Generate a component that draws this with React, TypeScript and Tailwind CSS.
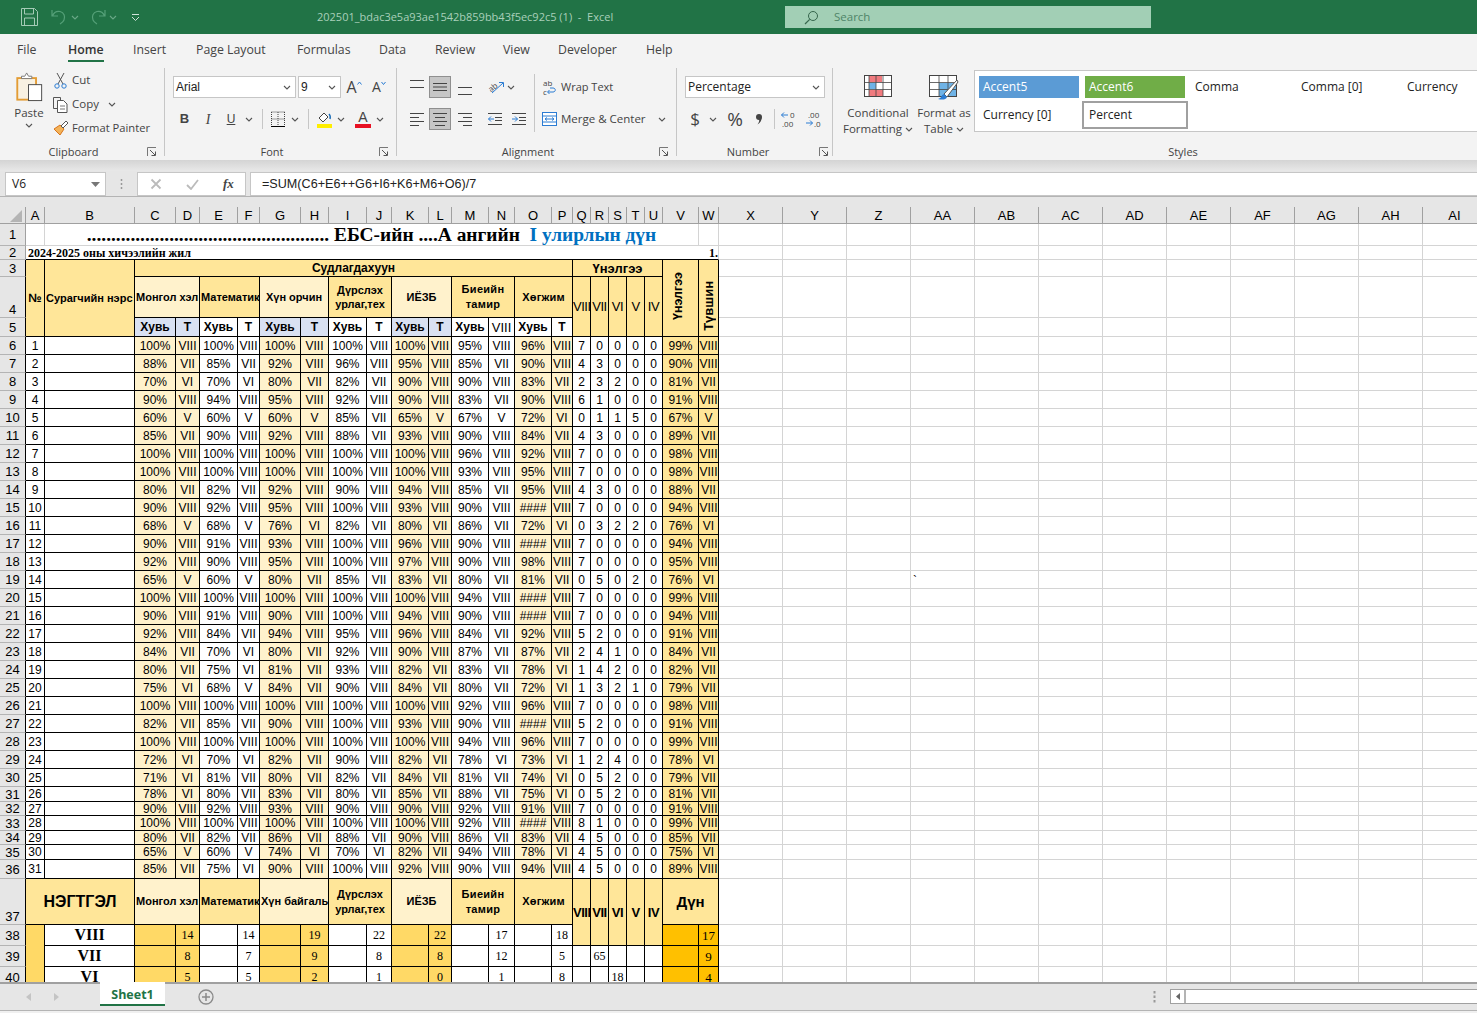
import React from "react";

const ui = "font-['Open_Sans','Noto_Sans',sans-serif]";
const sans = "font-['Liberation_Sans',Arial,sans-serif]";
const serif = "font-['Liberation_Serif','Times_New_Roman',serif]";

const DATA = `100 VIII 100 VIII 100 VIII 100 VIII 100 VIII 95 VIII 96 VIII 7 0 0 0 0 99 VIII
88 VII 85 VII 92 VIII 96 VIII 95 VIII 85 VII 90 VIII 4 3 0 0 0 90 VIII
70 VI 70 VI 80 VII 82 VII 90 VIII 90 VIII 83 VII 2 3 2 0 0 81 VII
90 VIII 94 VIII 95 VIII 92 VIII 90 VIII 83 VII 90 VIII 6 1 0 0 0 91 VIII
60 V 60 V 60 V 85 VII 65 V 67 V 72 VI 0 1 1 5 0 67 V
85 VII 90 VIII 92 VIII 88 VII 93 VIII 90 VIII 84 VII 4 3 0 0 0 89 VII
100 VIII 100 VIII 100 VIII 100 VIII 100 VIII 96 VIII 92 VIII 7 0 0 0 0 98 VIII
100 VIII 100 VIII 100 VIII 100 VIII 100 VIII 93 VIII 95 VIII 7 0 0 0 0 98 VIII
80 VII 82 VII 92 VIII 90 VIII 94 VIII 85 VII 95 VIII 4 3 0 0 0 88 VII
90 VIII 92 VIII 95 VIII 100 VIII 93 VIII 90 VIII # VIII 7 0 0 0 0 94 VIII
68 V 68 V 76 VI 82 VII 80 VII 86 VII 72 VI 0 3 2 2 0 76 VI
90 VIII 91 VIII 93 VIII 100 VIII 96 VIII 90 VIII # VIII 7 0 0 0 0 94 VIII
92 VIII 90 VIII 95 VIII 100 VIII 97 VIII 90 VIII 98 VIII 7 0 0 0 0 95 VIII
65 V 60 V 80 VII 85 VII 83 VII 80 VII 81 VII 0 5 0 2 0 76 VI
100 VIII 100 VIII 100 VIII 100 VIII 100 VIII 94 VIII # VIII 7 0 0 0 0 99 VIII
90 VIII 91 VIII 90 VIII 100 VIII 94 VIII 90 VIII # VIII 7 0 0 0 0 94 VIII
92 VIII 84 VII 94 VIII 95 VIII 96 VIII 84 VII 92 VIII 5 2 0 0 0 91 VIII
84 VII 70 VI 80 VII 92 VIII 90 VIII 87 VII 87 VII 2 4 1 0 0 84 VII
80 VII 75 VI 81 VII 93 VIII 82 VII 83 VII 78 VI 1 4 2 0 0 82 VII
75 VI 68 V 84 VII 90 VIII 84 VII 80 VII 72 VI 1 3 2 1 0 79 VII
100 VIII 100 VIII 100 VIII 100 VIII 100 VIII 92 VIII 96 VIII 7 0 0 0 0 98 VIII
82 VII 85 VII 90 VIII 100 VIII 93 VIII 90 VIII # VIII 5 2 0 0 0 91 VIII
100 VIII 100 VIII 100 VIII 100 VIII 100 VIII 94 VIII 96 VIII 7 0 0 0 0 99 VIII
72 VI 70 VI 82 VII 90 VIII 82 VII 78 VI 73 VI 1 2 4 0 0 78 VI
71 VI 81 VII 80 VII 82 VII 84 VII 81 VII 74 VI 0 5 2 0 0 79 VII
78 VI 80 VII 83 VII 80 VII 85 VII 88 VII 75 VI 0 5 2 0 0 81 VII
90 VIII 92 VIII 93 VIII 90 VIII 90 VIII 92 VIII 91 VIII 7 0 0 0 0 91 VIII
100 VIII 100 VIII 100 VIII 100 VIII 100 VIII 92 VIII # VIII 8 1 0 0 0 99 VIII
80 VII 82 VII 86 VII 88 VII 90 VIII 86 VII 83 VII 4 5 0 0 0 85 VII
65 V 60 V 74 VI 70 VI 82 VII 94 VIII 78 VI 4 5 0 0 0 75 VI
85 VII 75 VI 90 VIII 100 VIII 92 VIII 90 VIII 94 VIII 4 5 0 0 0 89 VIII`
  .split("\n")
  .map((r) => r.split(" "));

const COLS: [string, string][] = [
  ["A", "w-[19px]"], ["B", "w-[90px]"], ["C", "w-[41px]"], ["D", "w-[24px]"], ["E", "w-[38px]"], ["F", "w-[22px]"],
  ["G", "w-[41px]"], ["H", "w-[28px]"], ["I", "w-[38px]"], ["J", "w-[25px]"], ["K", "w-[37px]"], ["L", "w-[23px]"],
  ["M", "w-[37px]"], ["N", "w-[26px]"], ["O", "w-[37px]"], ["P", "w-[21px]"], ["Q", "w-[18px]"], ["R", "w-[18px]"],
  ["S", "w-[18px]"], ["T", "w-[18px]"], ["U", "w-[18px]"], ["V", "w-[36px]"], ["W", "w-[20px]"],
  ["X", "w-[64px]"], ["Y", "w-[64px]"], ["Z", "w-[64px]"], ["AA", "w-[64px]"], ["AB", "w-[64px]"], ["AC", "w-[64px]"],
  ["AD", "w-[64px]"], ["AE", "w-[64px]"], ["AF", "w-[64px]"], ["AG", "w-[64px]"], ["AH", "w-[64px]"], ["AI", "w-[64px]"],
];

const ROW_H: Record<number, string> = {
  31: "h-[15px]", 32: "h-[14px]", 33: "h-[15px]", 34: "h-[14px]", 35: "h-[15px]", 36: "h-[19px]",
};

const LIGHT = "bg-[#FFF2CC]";
const DARK = "bg-[#FFE699]";
const BLUE = "bg-[#D9E1F2]";
const ORANGE = "bg-[#FFD966]";
const AMBER = "bg-[#FFC000]";
const c = `border-r border-b border-black p-0 text-center align-middle overflow-hidden whitespace-nowrap leading-none text-black ${sans}`;
const grid = "border-r border-b border-[#d4d4d4] p-0 overflow-hidden whitespace-nowrap";

function Blanks({ tick }: { tick?: boolean }) {
  return (
    <>
      {Array.from({ length: 12 }).map((_, i) => (
        <td key={i} className={`${grid} ${sans} text-[12px] leading-none pl-[2px] align-top`}>
          {tick && i === 3 ? <span className="inline-block mt-[4px]">`</span> : null}
        </td>
      ))}
    </>
  );
}

function RowHead({ n, h, bottom, light }: { n: number; h: string; bottom?: boolean; light?: boolean }) {
  return (
    <td
      className={`${h} bg-[#e6e6e6] border-b border-b-[#b4b4b4] border-r p-0 text-center text-[13px] leading-none text-black overflow-hidden ${sans} ${
        light ? "border-r-[#a0a0a0]" : "border-r-black"
      } ${bottom ? "align-bottom pb-[1px]" : "align-middle"}`}
    >
      {n}
    </td>
  );
}

const Chev = ({ className = "" }: { className?: string }) => (
  <svg width="8" height="5" viewBox="0 0 8 5" className={className}>
    <path d="M1 1l3 3 3-3" fill="none" stroke="#555" strokeWidth="1.1" />
  </svg>
);

const TitleChev = ({ className = "" }: { className?: string }) => (
  <svg width="8" height="5" viewBox="0 0 8 5" className={className}>
    <path d="M1 1l3 3 3-3" fill="none" stroke="#6aa887" strokeWidth="1.1" />
  </svg>
);

function Slot({ w, children, className = "" }: { w: string; children?: React.ReactNode; className?: string }) {
  return <div className={`${w} h-[22px] flex items-center justify-center shrink-0 ${className}`}>{children}</div>;
}

const Launcher = () => (
  <svg width="10" height="10" viewBox="0 0 10 10">
    <path d="M.5 9V.5H9" fill="none" stroke="#777" />
    <path d="M3 3l5 5M8.500 4.500v4h-4" fill="none" stroke="#555" />
  </svg>
);

/* vertical alignment buttons: horizontal strokes at given y inside the 22px slot */
const VAlign = ({ ys }: { ys: number[] }) => (
  <svg width="16" height="22" viewBox="0 0 16 22">
    {ys.map((y, i) => (
      <path key={i} d={`M1 ${y}h14`} stroke="#444" />
    ))}
  </svg>
);

const LinesAlign = ({ rows }: { rows: [number, number][] }) => (
  <svg width="16" height="15" viewBox="0 0 16 15">
    {rows.map(([x, l], i) => (
      <path key={i} d={`M${x} ${i * 4 + 1.5}h${l}`} stroke="#444" />
    ))}
  </svg>
);

function Group({ w, label, labelW, children }: { w: string; label: string; labelW: string; children: React.ReactNode }) {
  return (
    <div className={`${w} h-[88px] mt-[4px] border-r border-[#c6c6c6] flex flex-col shrink-0`}>
      <div className="h-[76px] shrink-0">{children}</div>
      <div className="h-[16px] shrink-0 flex items-center">
        <div className={`${labelW} text-center text-[11px] text-[#444]`}>{label}</div>
        <Launcher />
      </div>
    </div>
  );
}

const TABS: [string, string][] = [
  ["File", "w-[51px]"], ["Home", "w-[65px]"], ["Insert", "w-[63px]"], ["Page Layout", "w-[101px]"], ["Formulas", "w-[82px]"],
  ["Data", "w-[56px]"], ["Review", "w-[68px]"], ["View", "w-[55px]"], ["Developer", "w-[88px]"], ["Help", "w-[40px]"],
];

const SUBJECTS = [
  { bg: LIGHT, t: "Монгол хэл", s: "C" },
  { bg: DARK, t: "Математик", s: "E" },
  { bg: LIGHT, t: "Хүн орчин", s: "G" },
];

export default function App() {
  return (
    <div className={`w-[1477px] h-[1013px] overflow-hidden bg-[#e6e6e6] flex flex-col ${ui}`}>
      {/* Title bar */}
      <div className="h-[34px] shrink-0 bg-[#217346] flex items-center text-[11.5px] text-[#a9d0ba]">
        <div className="w-[317px] flex items-center shrink-0 pl-[21px]">
          <svg width="17" height="18" viewBox="0 0 17 18" className="mb-[1px]">
            <path d="M.5.500h13l3 3v14H.5z" fill="none" stroke="#a5cbb6" />
            <path d="M3.500 1v5h9V1M3.500 17v-7h10v7" fill="none" stroke="#a5cbb6" />
          </svg>
          <svg width="16" height="18" viewBox="0 0 16 18" className="ml-[13px]">
            <path d="M1 2v6h6M1.500 8C3 4 6 3 9 3.500c4 1 5.500 5 4 8.500-.8 2-2.500 3-4 4" fill="none" stroke="#55a078" strokeWidth="1.200" />
          </svg>
          <TitleChev className="ml-[4px]" />
          <svg width="16" height="18" viewBox="0 0 16 18" className="ml-[11px]">
            <path d="M15 2v6H9M14.500 8C13 4 10 3 7 3.500c-4 1-5.500 5-4 8.500.8 2 2.500 3 4 4" fill="none" stroke="#55a078" strokeWidth="1.200" />
          </svg>
          <TitleChev className="ml-[3px]" />
          <svg width="9" height="9" viewBox="0 0 9 9" className="ml-[14px]">
            <path d="M1 1.500h7M1 4l3.500 3.500L8 4" fill="none" stroke="#cfe3d8" />
          </svg>
        </div>
        <div className="w-[468px] shrink-0 whitespace-nowrap text-[11px]">202501_bdac3e5a93ae1542b859bb43f5ec92c5 (1)&nbsp; -&nbsp; Excel</div>
        <div className="w-[366px] h-[22px] bg-[#a2cfb5] flex items-center text-[#4f8568] shrink-0 pl-[19px] gap-[15px]">
          <svg width="15" height="15" viewBox="0 0 15 15">
            <circle cx="9" cy="6" r="4.500" fill="none" stroke="#36664c" />
            <path d="M5.700 9.300L1 14" stroke="#36664c" strokeWidth="1.200" />
          </svg>
          <span>Search</span>
        </div>
      </div>

      {/* Tabs */}
      <div className="h-[30px] shrink-0 bg-[#f3f3f3] flex pl-[17px] pt-[6px] text-[12.3px] text-[#444]">
        {TABS.map(([t, w]) => (
          <div key={t} className={`${w} shrink-0`}>
            <span className={`inline-block h-[22px] leading-[20px] ${t === "Home" ? "font-semibold text-[#333] border-b-2 border-[#217346]" : ""}`}>{t}</span>
          </div>
        ))}
      </div>

      {/* Ribbon */}
      <div className="h-[96px] shrink-0 bg-[#f3f3f3] flex text-[11.5px] text-[#444]">
        <Group w="w-[165px]" label="Clipboard" labelW="w-[147px]">
          <div className="flex">
            <div className="w-[53px] pl-[5px] flex flex-col items-center pt-[4px] shrink-0">
              <svg width="30" height="30" viewBox="0 0 30 32">
                <rect x="2.500" y="6.500" width="20" height="23" fill="#f8f1e2" stroke="#e39c34" strokeWidth="2" />
                <path d="M7 7V4.500h3.500L12.500 1l2 3.500H18V7z" fill="#fff" stroke="#777" />
                <rect x="14.500" y="13.500" width="14" height="17" fill="#fff" stroke="#444" />
              </svg>
              <div className="mt-[3px] leading-[16px]">Paste</div>
              <Chev className="mt-[2px]" />
            </div>
            <div className="flex flex-col">
              <div className="h-[24px] flex items-center gap-[4px]">
                <svg width="15" height="17" viewBox="0 0 15 17">
                  <path d="M4 1l6 11M11 1L5 12" stroke="#555" fill="none" />
                  <circle cx="4" cy="14" r="2.200" fill="none" stroke="#2b7cd3" />
                  <circle cx="11" cy="14" r="2.200" fill="none" stroke="#2b7cd3" />
                </svg>
                <span>Cut</span>
              </div>
              <div className="h-[24px] flex items-center gap-[4px]">
                <svg width="15" height="17" viewBox="0 0 15 17">
                  <path d="M4 12.500H.5V1.500h7V4" fill="none" stroke="#555" />
                  <path d="M4.500 4.500h6l3.500 3.500v8.500H4.500z" fill="#fff" stroke="#555" />
                  <path d="M7 10h5M7 13h5" stroke="#777" />
                </svg>
                <span>Copy</span>
                <Chev className="ml-[5px]" />
              </div>
              <div className="h-[24px] flex items-center gap-[3px] text-[11.2px]">
                <svg width="16" height="16" viewBox="0 0 16 16">
                  <path d="M1 9l6-4 4 4-4 6z" fill="#f3b35a" stroke="#d8741a" />
                  <path d="M8 6l5-5 2 2-5 5z" fill="#fff" stroke="#555" />
                </svg>
                <span>Format Painter</span>
              </div>
            </div>
          </div>
        </Group>

        <Group w="w-[232px]" label="Font" labelW="w-[214px]">
          <div className="pt-[8px] pl-[8px]">
            <div className="flex items-center h-[22px]">
              <div className={`w-[123px] h-[22px] bg-white border border-[#c6c6c6] flex items-center justify-between pl-[2px] pr-[4px] text-[12px] text-[#222] ${sans}`}>
                Arial <Chev />
              </div>
              <div className={`w-[43px] ml-[2px] h-[22px] bg-white border border-[#c6c6c6] flex items-center justify-between pl-[2px] pr-[4px] text-[12px] text-[#222] ${sans}`}>
                9 <Chev />
              </div>
              <Slot w="w-[20px] ml-[3px]">
                <span className="text-[16px] leading-none">A</span>
                <svg width="5" height="4" viewBox="0 0 5 4" className="mb-[9px]"><path d="M.5 3.500l2-2.500 2 2.500" fill="none" stroke="#2b7cd3" /></svg>
              </Slot>
              <Slot w="w-[18px] ml-[6px]">
                <span className="text-[14px] leading-none">A</span>
                <svg width="5" height="4" viewBox="0 0 5 4" className="mb-[9px]"><path d="M.5 1l2 2.500 2-2.500" fill="none" stroke="#2b7cd3" /></svg>
              </Slot>
            </div>
            <div className="flex items-center mt-[10px]">
              <Slot w="w-[23px]" className={`font-bold text-[13px] ${sans}`}>B</Slot>
              <Slot w="w-[24px]" className={`italic text-[14px] ${serif}`}>I</Slot>
              <Slot w="w-[22px]" className={`underline text-[12px] ${sans}`}>U</Slot>
              <Slot w="w-[14px]"><Chev /></Slot>
              <Slot w="w-[12px]"><div className="w-px h-[20px] bg-[#c6c6c6]" /></Slot>
              <Slot w="w-[20px]">
                <svg width="16" height="16" viewBox="0 0 16 16">
                  <path d="M1.500 1h13M1.500 8h13M8 1v14M1.500 1v14M14.500 1v14" stroke="#444" strokeDasharray="1 1" fill="none" />
                  <path d="M1 15.500h14" stroke="#000" />
                </svg>
              </Slot>
              <Slot w="w-[14px]"><Chev /></Slot>
              <Slot w="w-[12px]"><div className="w-px h-[20px] bg-[#c6c6c6]" /></Slot>
              <Slot w="w-[20px]">
                <svg width="17" height="18" viewBox="0 0 17 18">
                  <path d="M3 8l5-5 4 4-5 5z" fill="#fff" stroke="#444" />
                  <path d="M13 4c1 1 1.500 3 1 5" fill="none" stroke="#1e6fb8" strokeWidth="1.500" />
                  <rect x="1" y="14" width="15" height="4" fill="#ffee00" />
                </svg>
              </Slot>
              <Slot w="w-[14px]"><Chev /></Slot>
              <Slot w="w-[5px]" />
              <Slot w="w-[20px]">
                <div className="flex flex-col items-center">
                  <span className={`text-[14px] leading-[14px] ${sans}`}>A</span>
                  <div className="w-[16px] h-[4px] bg-[#e81123]" />
                </div>
              </Slot>
              <Slot w="w-[14px]"><Chev /></Slot>
            </div>
          </div>
        </Group>

        <Group w="w-[280px]" label="Alignment" labelW="w-[262px]">
          <div className="flex pt-[6px]">
            <div className="w-[137px] pt-[2px] pl-[8px]">
              <div className="flex items-center">
                <Slot w="w-[23px]"><VAlign ys={[4.5, 11.5]} /></Slot>
                <Slot w="w-[22px] ml-[1px] bg-[#c6c6c6] border border-[#8f8f8f]"><VAlign ys={[7.5, 11, 14.5]} /></Slot>
                <Slot w="w-[23px] ml-[2px]"><VAlign ys={[11.5, 18.5]} /></Slot>
                <Slot w="w-[22px] ml-[8px]">
                  <svg width="20" height="20" viewBox="0 0 20 20">
                    <text x="3" y="13" fontSize="8" fill="#444" transform="rotate(-40 8 10)">ab</text>
                    <path d="M7 16L18 6M14 5.500h4.500V10" fill="none" stroke="#2b7cd3" />
                  </svg>
                </Slot>
                <Slot w="w-[10px]"><Chev /></Slot>
              </div>
              <div className="flex items-center mt-[10px]">
                <Slot w="w-[23px]"><LinesAlign rows={[[1, 14], [1, 9], [1, 14], [1, 9]]} /></Slot>
                <Slot w="w-[22px] ml-[1px] bg-[#c6c6c6] border border-[#8f8f8f]"><LinesAlign rows={[[1, 14], [3, 10], [1, 14], [3, 10]]} /></Slot>
                <Slot w="w-[23px] ml-[2px]"><LinesAlign rows={[[1, 14], [6, 9], [1, 14], [6, 9]]} /></Slot>
                <Slot w="w-[22px] ml-[8px]">
                  <svg width="16" height="14" viewBox="0 0 16 14">
                    <path d="M1 1.500h14M1 12.500h14M8 5.500h7M8 8.500h7" stroke="#444" />
                    <path d="M7 7H1.500M4 4.500L1.500 7 4 9.500" fill="none" stroke="#2b7cd3" />
                  </svg>
                </Slot>
                <Slot w="w-[22px] ml-[2px]">
                  <svg width="16" height="14" viewBox="0 0 16 14">
                    <path d="M1 1.500h14M1 12.500h14M8 5.500h7M8 8.500h7" stroke="#444" />
                    <path d="M1 7h5.500M4 4.500L6.500 7 4 9.500" fill="none" stroke="#2b7cd3" />
                  </svg>
                </Slot>
              </div>
            </div>
            <div className="w-px h-[58px] bg-[#c6c6c6] shrink-0" />
            <div className="pt-[2px] pl-[7px]">
              <div className="h-[22px] flex items-center gap-[4px]">
                <svg width="15" height="20" viewBox="0 0 15 20">
                  <text x="1" y="9" fontSize="8" fill="#444">ab</text>
                  <text x="1" y="18" fontSize="8" fill="#444">c</text>
                  <path d="M6 15h5c3 0 3-4 0-4H8M7.500 13L5.500 15l2 2" fill="none" stroke="#2b7cd3" />
                </svg>
                <span className="text-[11px]">Wrap Text</span>
              </div>
              <div className="h-[22px] mt-[10px] flex items-center gap-[4px]">
                <svg width="15" height="14" viewBox="0 0 15 14">
                  <rect x=".5" y=".5" width="14" height="13" fill="#fff" stroke="#2b7cd3" />
                  <path d="M.5 4h14M.5 10h14" stroke="#2b7cd3" />
                  <path d="M3 7h9M5 5.500L3 7l2 1.500M10 5.500L12 7l-2 1.500" fill="none" stroke="#2b7cd3" />
                </svg>
                <span>Merge &amp; Center</span>
                <Chev className="ml-[8px]" />
              </div>
            </div>
          </div>
        </Group>

        <Group w="w-[156px]" label="Number" labelW="w-[142px]">
          <div className="pt-[8px] pl-[8px]">
            <div className="w-[140px] h-[22px] bg-white border border-[#c6c6c6] flex items-center justify-between pl-[2px] pr-[4px] text-[12px] text-[#222]">
              Percentage <Chev />
            </div>
            <div className="flex items-center mt-[10px]">
              <Slot w="w-[20px]" className="text-[17px]">$</Slot>
              <Slot w="w-[14px] ml-[1px]"><Chev /></Slot>
              <Slot w="w-[24px] ml-[3px]" className="text-[19px]">%</Slot>
              <Slot w="w-[20px] ml-[2px]">
                <svg width="8" height="12" viewBox="0 0 8 12"><circle cx="4" cy="4" r="3" fill="#444" /><path d="M6.500 4c.5 3-1 6-4 7.500 1.500-2 2-3.500 1.500-5z" fill="#444" /></svg>
              </Slot>
              <Slot w="w-[10px]"><div className="w-px h-[20px] bg-[#c6c6c6]" /></Slot>
              <Slot w="w-[20px]">
                <svg width="18" height="18" viewBox="0 0 18 18">
                  <path d="M8 5H1.500M4 2.500L1.500 5 4 7.500" fill="none" stroke="#2b7cd3" />
                  <text x="10" y="8" fontSize="8" fill="#444">0</text>
                  <text x="2" y="17" fontSize="8" fill="#444">.00</text>
                </svg>
              </Slot>
              <Slot w="w-[20px] ml-[5px]">
                <svg width="18" height="18" viewBox="0 0 18 18">
                  <text x="3" y="8" fontSize="8" fill="#444">.00</text>
                  <path d="M1 13h6.500M5 10.500L7.500 13 5 15.500" fill="none" stroke="#2b7cd3" />
                  <text x="9" y="17" fontSize="8" fill="#444">.0</text>
                </svg>
              </Slot>
            </div>
          </div>
        </Group>

        <div className="flex-1 h-[88px] mt-[4px] flex flex-col min-w-0">
          <div className="h-[76px] shrink-0 flex">
            <div className="w-[83px] pl-[7px] flex flex-col items-center pt-[7px] shrink-0">
              <svg width="28" height="22" viewBox="0 0 28 22">
                <rect x=".5" y=".5" width="27" height="21" fill="#fff" stroke="#444" />
                <rect x="5" y="1" width="13" height="6" fill="#f07b7f" />
                <rect x="5" y="8" width="7" height="6" fill="#6fb3e6" />
                <rect x="5" y="15" width="14" height="6" fill="#f07b7f" />
                <path d="M5 1v20M12 1v20M19 1v20M1 7.500h26M1 14.500h26" stroke="#444" strokeWidth=".8" />
              </svg>
              <div className="text-center leading-[16px] mt-[8px] whitespace-nowrap">Conditional<br />Formatting <Chev className="inline" /></div>
            </div>
            <div className="w-[56px] flex flex-col items-center pt-[7px] shrink-0">
              <svg width="30" height="26" viewBox="0 0 30 26">
                <rect x=".5" y=".5" width="27" height="21" fill="#fff" stroke="#444" />
                <rect x="10" y="8" width="17" height="13" fill="#6fb3e6" />
                <path d="M1 7.500h26M1 14.500h26M10 1v20M19 1v20" stroke="#444" strokeWidth=".8" />
                <path d="M28 5L15 19l3 3 11-15z" fill="#fff" stroke="#555" />
                <path d="M15 19c-3 1-2 4-6 5 4 1 8 1 9-2z" fill="#2b7cd3" />
              </svg>
              <div className="text-center leading-[16px] mt-[4px] whitespace-nowrap">Format as<br />Table <Chev className="inline" /></div>
            </div>
            <div className="flex-1 ml-[2px] mt-[2px] h-[62px] bg-white border-y border-l border-[#c6c6c6] pl-[4px] pt-[5px] text-[12px] text-[#222]">
              <div className="flex h-[22px] items-center">
                <div className="w-[100px] h-[22px] bg-[#5b9bd5] text-white flex items-center pl-[4px]">Accent5</div>
                <div className="w-[100px] h-[22px] bg-[#70ad47] text-white flex items-center pl-[4px] ml-[6px]">Accent6</div>
                <div className="w-[106px] pl-[10px]">Comma</div>
                <div className="w-[106px] pl-[10px]">Comma [0]</div>
                <div className="w-[70px] pl-[10px]">Currency</div>
              </div>
              <div className="flex items-center mt-[3px]">
                <div className="w-[103px] pl-[4px]">Currency [0]</div>
                <div className="w-[106px] h-[28px] bg-white border-2 border-[#a0a0a0] flex items-center pl-[5px]">Percent</div>
              </div>
            </div>
          </div>
          <div className="h-[16px] shrink-0 flex items-center justify-center pl-[56px] text-[11px] text-[#444]">Styles</div>
        </div>
      </div>

      {/* Ribbon shadow */}
      <div className="h-[11px] shrink-0 bg-gradient-to-b from-[#d4d4d4] to-[#e8e8e8]" />

      {/* Formula bar */}
      <div className="h-[26px] shrink-0 bg-[#e6e6e6] border-b border-[#b4b4b4] flex items-start pt-[1px] text-[12px] text-[#222]">
        <div className="w-[101px] ml-[5px] h-[24px] bg-white border border-[#c6c6c6] flex items-center justify-between pl-[6px] pr-[5px] shrink-0">
          V6
          <svg width="9" height="5" viewBox="0 0 9 5"><path d="M0 0h9L4.500 5z" fill="#777" /></svg>
        </div>
        <div className="w-[31px] h-[24px] flex items-center justify-center shrink-0">
          <svg width="3" height="12" viewBox="0 0 3 12"><path d="M1.500 1v2M1.500 5v2M1.500 9v2" stroke="#999" strokeWidth="1.500" /></svg>
        </div>
        <div className="w-[109px] h-[24px] bg-white border border-[#c6c6c6] flex items-center shrink-0 pl-[12px] gap-[24px]">
          <svg width="12" height="12" viewBox="0 0 12 12"><path d="M1.500 1.500l9 9M10.500 1.500l-9 9" stroke="#bbb" strokeWidth="1.800" /></svg>
          <svg width="13" height="12" viewBox="0 0 13 12"><path d="M1 7l4 4 7-9" fill="none" stroke="#bbb" strokeWidth="1.800" /></svg>
          <span className={`italic font-bold text-[13px] text-[#444] ${serif}`}>fx</span>
        </div>
        <div className={`flex-1 ml-[4px] h-[24px] bg-white border-y border-l border-[#c6c6c6] flex items-center pl-[11px] text-[12.6px] ${sans}`}>
          =SUM(C6+E6++G6+I6+K6+M6+O6)/7
        </div>
      </div>

      <div className="h-[10px] shrink-0 bg-[#e6e6e6]" />

      {/* Sheet */}
      <div className="h-[775px] shrink-0 overflow-hidden bg-white">
        <table className="table-fixed w-[1487px] border-separate border-spacing-0">
          <colgroup>
            <col className="w-[26px]" />
            {COLS.map(([n, w]) => (
              <col key={n} className={w} />
            ))}
          </colgroup>
          <tbody>
            <tr>
              <td className="h-[17px] bg-[#e6e6e6] border-r border-b border-[#a0a0a0] p-0 align-bottom">
                <svg width="25" height="16" viewBox="0 0 25 16" className="block"><path d="M22 3v12H10z" fill="#b4b4b4" /></svg>
              </td>
              {COLS.map(([n]) => (
                <td key={n} className={`bg-[#e6e6e6] border-r border-b border-[#a0a0a0] p-0 text-center text-[13px] leading-none text-black overflow-hidden align-middle ${sans}`}>
                  {n}
                </td>
              ))}
            </tr>

            {/* 1 */}
            <tr>
              <RowHead n={1} h="h-[22px]" light />
              <td className={grid} />
              <td colSpan={21} className={`${grid} text-center font-bold text-[19.4px] leading-none text-black ${serif}`}>
                .................................................. ЕБС-ийн ....А ангийн&nbsp; <span className="text-[#0070c0]">I улирлын дүн</span>
              </td>
              <td className={grid} />
              <Blanks />
            </tr>
            {/* 2 */}
            <tr>
              <RowHead n={2} h="h-[14px]" light />
              <td colSpan={22} className={`border-b border-black p-0 pl-[2px] overflow-hidden whitespace-nowrap font-bold text-[12px] leading-none text-black align-middle ${serif}`}>
                2024-2025 оны хичээлийн жил
              </td>
              <td className={`border-b border-black border-r border-r-[#d4d4d4] p-0 text-right font-bold text-[12px] leading-none overflow-hidden ${serif}`}>1.</td>
              <Blanks />
            </tr>
            {/* 3 */}
            <tr>
              <RowHead n={3} h="h-[17px]" />
              <td rowSpan={3} className={`${c} ${DARK} font-bold text-[12px]`}>№</td>
              <td rowSpan={3} className={`${c} ${DARK} font-bold text-[11px] text-left pl-[1px]`}>Сурагчийн нэрс</td>
              <td colSpan={14} className={`${c} ${DARK} font-bold text-[12px]`}>Судлагдахуун</td>
              <td colSpan={5} className={`${c} ${DARK} font-bold text-[13px]`}>Үнэлгээ</td>
              <td rowSpan={3} className={`${c} ${DARK}`}>
                <span className="inline-block [writing-mode:vertical-rl] rotate-180 font-bold text-[12.5px] mr-[4px]">Үнэлгээ</span>
              </td>
              <td rowSpan={3} className={`border-r border-b border-black p-0 text-center align-bottom overflow-hidden whitespace-nowrap leading-none text-black ${sans} ${DARK}`}>
                <span className="inline-block [writing-mode:vertical-rl] rotate-180 font-bold text-[13px] mb-[2px]">Түвшин</span>
              </td>
              <Blanks />
            </tr>
            {/* 4 */}
            <tr>
              <RowHead n={4} h="h-[41px]" bottom />
              {SUBJECTS.map((s) => (
                <td key={s.s} colSpan={2} className={`${c} ${s.bg} font-bold text-[11px] ${s.s === "G" ? "" : "text-left pl-[1px]"}`}>{s.t}</td>
              ))}
              <td colSpan={2} className={`${c} ${DARK} font-bold text-[11px] !leading-[14px]`}>Дүрслэх<br />урлаг,тех</td>
              <td colSpan={2} className={`${c} ${LIGHT} font-bold text-[11px]`}>ИЁЗБ</td>
              <td colSpan={2} className={`${c} ${DARK} font-bold text-[11px] tracking-[0.3px] !leading-[15px]`}>Биеийн<br />тамир</td>
              <td colSpan={2} className={`${c} ${DARK} font-bold text-[11px] tracking-[0.2px]`}>Хөгжим</td>
              {["VIII", "VII", "VI", "V", "IV"].map((v) => (
                <td key={v} rowSpan={2} className={`${c} ${DARK} text-[13px] tracking-[-0.5px]`}>{v}</td>
              ))}
              <Blanks />
            </tr>
            {/* 5 */}
            <tr>
              <RowHead n={5} h="h-[19px]" />
              {[
                ["Хувь", BLUE], ["Т", BLUE], ["Хувь", ""], ["Т", ""], ["Хувь", BLUE], ["Т", BLUE], ["Хувь", ""], ["Т", ""],
                ["Хувь", BLUE], ["Т", BLUE], ["Хувь", ""], ["VIII", ""], ["Хувь", ""], ["Т", ""],
              ].map(([t, bg], i) => (
                <td key={i} className={`${c} ${bg} ${t === "VIII" ? "text-[13px]" : "font-bold text-[12px]"}`}>{t}</td>
              ))}
              <Blanks />
            </tr>
            {/* 6–36 */}
            {DATA.map((row, idx) => {
              const rn = idx + 6;
              const no = idx + 1;
              const h = ROW_H[rn] ?? "h-[18px]";
              return (
                <tr key={rn}>
                  <RowHead n={rn} h={h} />
                  <td className={`${c} text-[12px]`}>{no}</td>
                  <td className={c} />
                  {row.map((v, i) => {
                    const bg = [0, 1, 4, 5, 8, 9, 12, 13].includes(i) ? LIGHT : i >= 19 ? DARK : "";
                    const isPct = i < 14 ? i % 2 === 0 : i === 19;
                    const text = v === "#" ? "####" : isPct ? `${v}%` : v;
                    return (
                      <td key={i} className={`${c} ${bg} text-[12px]`}>{text}</td>
                    );
                  })}
                  <Blanks tick={rn === 19} />
                </tr>
              );
            })}
            {/* 37 */}
            <tr>
              <RowHead n={37} h="h-[46px]" bottom />
              <td colSpan={2} className={`${c} ${DARK} font-bold text-[16px]`}>НЭГТГЭЛ</td>
              <td colSpan={2} className={`${c} ${LIGHT} font-bold text-[11px] text-left pl-[1px]`}>Монгол хэл</td>
              <td colSpan={2} className={`${c} ${DARK} font-bold text-[11px] text-left pl-[1px]`}>Математик</td>
              <td colSpan={2} className={`${c} ${LIGHT} font-bold text-[11px] text-left pl-[1px]`}>Хүн байгаль</td>
              <td colSpan={2} className={`${c} ${DARK} font-bold text-[11px] !leading-[15px]`}>Дүрслэх<br />урлаг,тех</td>
              <td colSpan={2} className={`${c} ${LIGHT} font-bold text-[11px]`}>ИЁЗБ</td>
              <td colSpan={2} className={`${c} ${DARK} font-bold text-[11px] tracking-[0.3px] !leading-[15px]`}>Биеийн<br />тамир</td>
              <td colSpan={2} className={`${c} ${DARK} font-bold text-[11px] tracking-[0.2px]`}>Хөгжим</td>
              {["VIII", "VII", "VI", "V", "IV"].map((v) => (
                <td key={v} rowSpan={2} className={`${c} ${DARK} font-bold text-[13px] tracking-[-0.5px]`}>{v}</td>
              ))}
              <td colSpan={2} className={`${c} ${DARK} font-bold text-[15px]`}>Дүн</td>
              <Blanks />
            </tr>
            {/* 38–40 */}
            {[
              { r: 38, b: "VIII", v: ["14", "14", "19", "22", "22", "17", "18"], q: null as null | string[], w: "17" },
              { r: 39, b: "VII", v: ["8", "7", "9", "8", "8", "12", "5"], q: ["", "65", "", "", ""], w: "9" },
              { r: 40, b: "VI", v: ["5", "5", "2", "1", "0", "1", "8"], q: ["", "", "18", "", ""], w: "4" },
            ].map((row) => (
              <tr key={row.r}>
                <RowHead n={row.r} h="h-[21px]" />
                {row.r === 38 && <td rowSpan={3} className={`${c} ${ORANGE}`} />}
                <td className={`${c} font-bold text-[16px] ${serif}`}>{row.b}</td>
                {row.v.map((x, i) => {
                  const bg = i === 0 || i === 2 || i === 4 ? ORANGE : "";
                  return (
                    <React.Fragment key={i}>
                      <td className={`${c} ${bg}`} />
                      <td className={`${c} ${bg} text-[12px] ${serif}`}>{x}</td>
                    </React.Fragment>
                  );
                })}
                {row.q && row.q.map((x, i) => <td key={i} className={`${c} text-[12px] ${serif}`}>{x}</td>)}
                <td className={`${c} ${AMBER}`} />
                <td className={`${c} ${AMBER} text-[13px] ${serif}`}>{row.w}</td>
                <Blanks />
              </tr>
            ))}
          </tbody>
        </table>
      </div>

      {/* Bottom */}
      <div className="h-[28px] shrink-0 bg-[#e6e6e6] border-t-2 border-[#a0a0a0] flex text-[12px]">
        <div className="w-[100px] flex items-start pt-[9px] pl-[26px] gap-[23px] shrink-0">
          <svg width="5" height="8" viewBox="0 0 5 8"><path d="M5 0v8L0 4z" fill="#c4c4c4" /></svg>
          <svg width="5" height="8" viewBox="0 0 5 8"><path d="M0 0v8l5-4z" fill="#c4c4c4" /></svg>
        </div>
        <div className="w-[65px] h-[24px] -mt-[2px] pt-[4px] bg-white border-b-2 border-[#217346] flex items-center justify-center font-bold text-[#217346] shrink-0 text-[12.5px]">Sheet1</div>
        <div className="ml-[33px] pt-[5px] shrink-0">
          <svg width="16" height="16" viewBox="0 0 16 16">
            <circle cx="8" cy="8" r="7" fill="none" stroke="#8a8a8a" strokeWidth="1.300" />
            <path d="M8 4v8M4 8h8" stroke="#8a8a8a" strokeWidth="1.500" />
          </svg>
        </div>
        <div className="w-[938px] shrink-0 pl-[6px]" />
        <div className="ml-[-6px] w-[16px] pt-[7px] shrink-0">
          <svg width="3" height="12" viewBox="0 0 3 12" className="mx-auto"><path d="M1.500 0v2.500M1.500 4.500v2.500M1.500 9v2.500" stroke="#999" strokeWidth="2" /></svg>
        </div>
        <div className="flex-1 ml-[8px] mt-[5px] h-[15px] bg-white border border-[#a0a0a0] border-r-0 flex min-w-0">
          <div className="w-[15px] border-r-2 border-[#b4b4b4] flex items-center justify-center shrink-0">
            <svg width="4" height="7" viewBox="0 0 4 7"><path d="M4 0v7L0 3.500z" fill="#666" /></svg>
          </div>
        </div>
      </div>
      <div className="h-[3px] shrink-0 bg-[#f0f0f0] border-t border-[#b4b4b4]" />
    </div>
  );
}
